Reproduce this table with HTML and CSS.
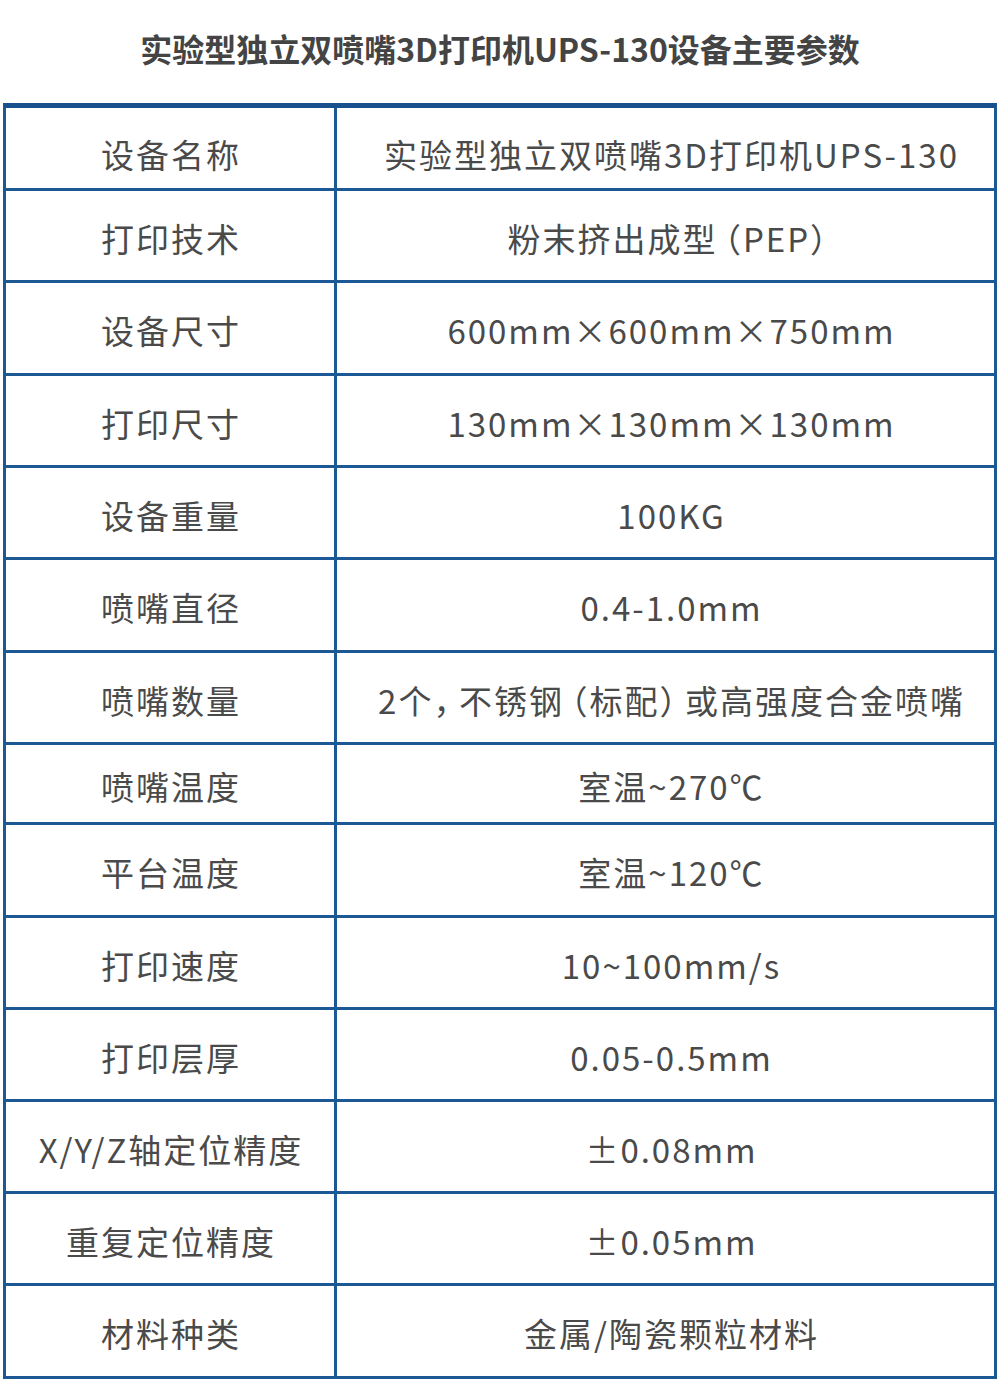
FILE: index.html
```html
<!DOCTYPE html>
<html lang="zh-CN">
<head>
<meta charset="utf-8">
<title>实验型独立双喷嘴3D打印机UPS-130设备主要参数</title>
<link rel="stylesheet" href="styles.css">
</head>
<body>
<h1 class="title">实验型独立双喷嘴3D打印机UPS-130设备主要参数</h1>
<div class="spec">
  <div class="row h80"><div class="cell key">设备名称</div><div class="cell val">实验型独立双喷嘴3D打印机UPS-130</div></div>
  <div class="row"><div class="cell key">打印技术</div><div class="cell val"><span class="txt">粉末挤出成型<span class="po">（</span>PEP<span class="pc">）</span></span></div></div>
  <div class="row h90"><div class="cell key">设备尺寸</div><div class="cell val">600mm×600mm×750mm</div></div>
  <div class="row"><div class="cell key">打印尺寸</div><div class="cell val">130mm×130mm×130mm</div></div>
  <div class="row"><div class="cell key">设备重量</div><div class="cell val">100KG</div></div>
  <div class="row h90"><div class="cell key">喷嘴直径</div><div class="cell val">0.4-1.0mm</div></div>
  <div class="row"><div class="cell key">喷嘴数量</div><div class="cell val"><span class="txt">2个<span class="pc">，</span>不锈钢<span class="po">（</span>标配<span class="pc">）</span>或高强度合金喷嘴</span></div></div>
  <div class="row h77"><div class="cell key">喷嘴温度</div><div class="cell val">室温~270℃</div></div>
  <div class="row h90"><div class="cell key">平台温度</div><div class="cell val">室温~120℃</div></div>
  <div class="row"><div class="cell key">打印速度</div><div class="cell val">10~100mm/s</div></div>
  <div class="row"><div class="cell key">打印层厚</div><div class="cell val">0.05-0.5mm</div></div>
  <div class="row"><div class="cell key">X/Y/Z轴定位精度</div><div class="cell val">±0.08mm</div></div>
  <div class="row"><div class="cell key">重复定位精度</div><div class="cell val">±0.05mm</div></div>
  <div class="row h90"><div class="cell key">材料种类</div><div class="cell val">金属/陶瓷颗粒材料</div></div>
</div>
</body>
</html>
```

FILE: styles.css
```css
html, body {
  margin: 0;
  padding: 0;
  background: #ffffff;
}

body {
  font-family: "Noto Sans CJK SC", "Noto Sans", sans-serif;
  color: #4a4a4a;
}

.title {
  margin: 0;
  height: 103px;
  box-sizing: border-box;
  padding-top: 28px;
  font-size: 32px;
  line-height: 40px;
  font-weight: 700;
  text-align: center;
  color: #444444;
}

.spec {
  margin: 0 3px;
  border: 3px solid #1c5893;
  border-top: 5px solid #17508c;
}

.row {
  display: grid;
  grid-template-columns: 331px 1fr;
  height: 89px;
  border-top: 3px solid #1c5893;
}

.row:first-child {
  border-top: none;
}

.row.h80 { height: 80px; }
.row.h77 { height: 77px; }
.row.h90 { height: 90px; }

.cell {
  display: flex;
  align-items: center;
  justify-content: center;
  padding-top: 4px;
  box-sizing: border-box;
  font-size: 33px;
  letter-spacing: 2px;
  white-space: nowrap;
}

.row.h80 .cell { padding-top: 12px; }

.key {
  padding-left: 2px;
  border-right: 3px solid #1c5893;
}

.val {
  padding-left: 12px;
}

.txt {
  display: inline;
}

.po,
.pc {
  font-feature-settings: "halt" 1;
}

.po {
  padding-left: 7px;
}

.pc {
  padding-right: 7px;
}
```
